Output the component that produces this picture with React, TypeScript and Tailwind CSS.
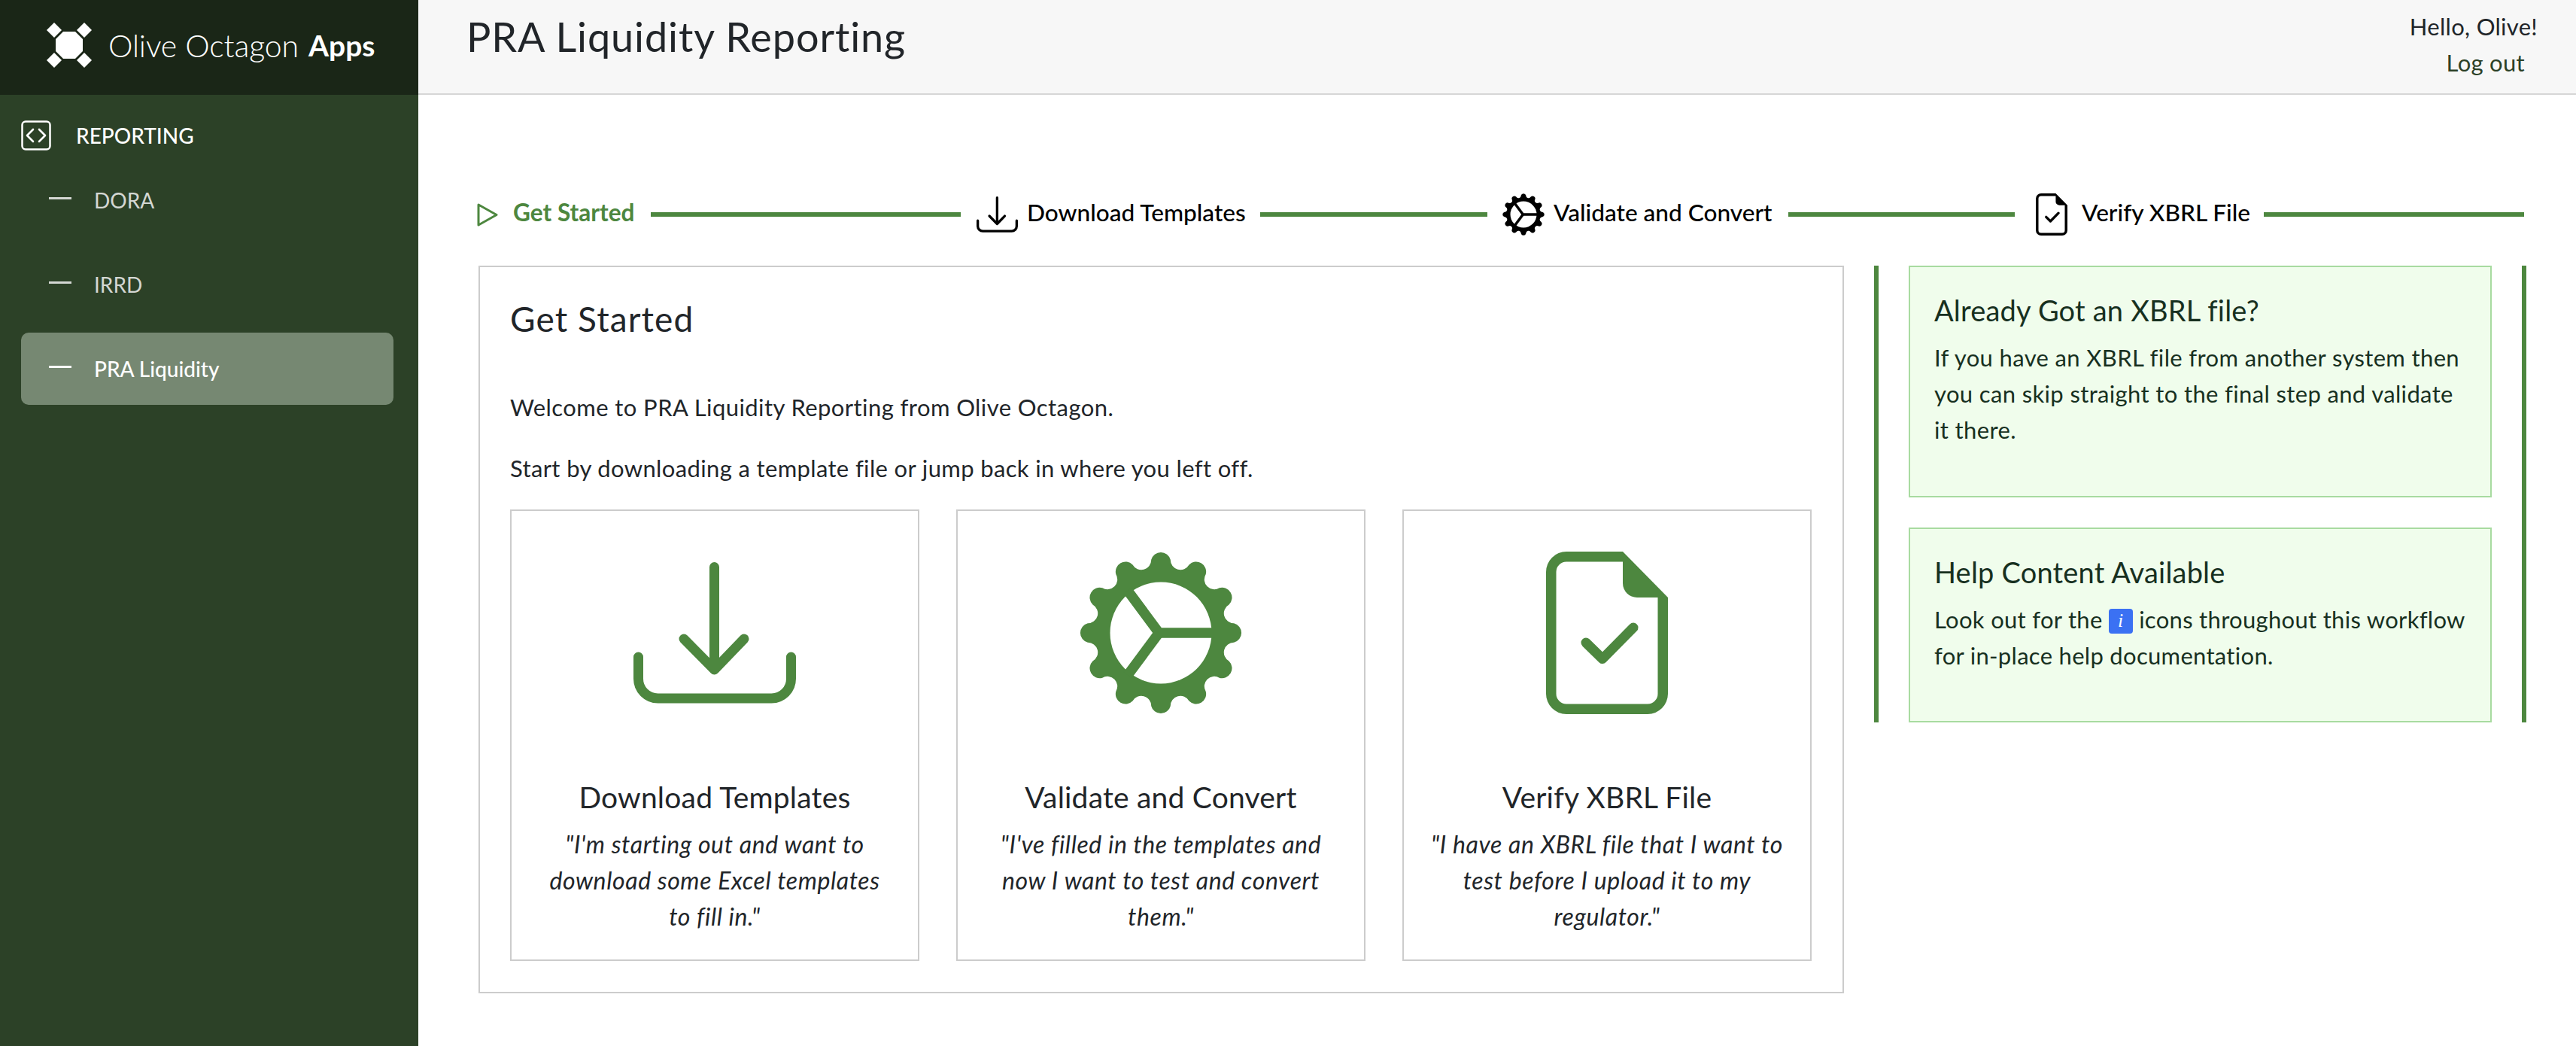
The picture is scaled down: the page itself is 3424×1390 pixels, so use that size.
import React from "react";

function gearPath(): string {
  const c = 108;
  const pts = 12;
  const step = (Math.PI * 2) / (pts * 2);
  const r = 98;
  let d = "";
  for (let i = 0; i < pts * 2; i++) {
    const a0 = -Math.PI / 2 - step / 2 + i * step;
    const a1 = a0 + step;
    const x0 = c + r * Math.cos(a0);
    const y0 = c + r * Math.sin(a0);
    const x1 = c + r * Math.cos(a1);
    const y1 = c + r * Math.sin(a1);
    if (i === 0) d += `M${x0.toFixed(2)} ${y0.toFixed(2)}`;
    d += `A13.2 13.2 0 0 ${i % 2 === 0 ? 1 : 0} ${x1.toFixed(2)} ${y1.toFixed(2)}`;
  }
  return d + "Z";
}
const GEAR = gearPath();

function DownloadIcon({ className, color }: { className: string; color: string }) {
  return (
    <svg viewBox="0 0 216 188" className={className} fill="none" stroke={color} strokeWidth="13" strokeLinecap="round" strokeLinejoin="round">
      <path d="M107.5 6.5V143M67 102l40.5 41L147 102" />
      <path d="M6.5 126V155A26 26 0 0 0 32.5 181H183.5A26 26 0 0 0 209.5 155V126" />
    </svg>
  );
}

function GearIcon({ className, color }: { className: string; color: string }) {
  return (
    <svg viewBox="0 0 216 216" className={className}>
      <path d={GEAR} fill={color} />
      <circle cx="108" cy="108" r="67.5" fill="#fff" />
      <g stroke={color} strokeWidth="13.5" fill="none">
        <path d="M180 108H105.5L64 52" />
        <path d="M105.5 108L64 164" />
      </g>
    </svg>
  );
}

function FileIcon({ className, color }: { className: string; color: string }) {
  return (
    <svg viewBox="0 0 162 216" className={className}>
      <path
        fillRule="evenodd"
        fill={color}
        d="M27 0H102L162 61V189A27 27 0 0 1 135 216H27A27 27 0 0 1 0 189V27A27 27 0 0 1 27 0ZM27 13.5A13.5 13.5 0 0 0 13.5 27V189A13.5 13.5 0 0 0 27 202.5H135A13.5 13.5 0 0 0 148.5 189V61H121A19 19 0 0 1 102 42V13.5Z"
      />
      <path d="M53 121L75 142.5L116 101" fill="none" stroke={color} strokeWidth="13" strokeLinecap="round" strokeLinejoin="round" />
    </svg>
  );
}

function LogoIcon() {
  return (
    <svg viewBox="0 0 60 60" className="w-[60px] h-[60px] shrink-0" fill="#fff">
      <polygon points="22,12 38,12 48,22 48,38 38,48 22,48 12,38 12,22" />
      <polygon points="10,0 20,10 10,20 0,10" />
      <polygon points="50,0 60,10 50,20 40,10" />
      <polygon points="10,40 20,50 10,60 0,50" />
      <polygon points="50,40 60,50 50,60 40,50" />
    </svg>
  );
}

function NavItem({ label, active }: { label: string; active?: boolean }) {
  return (
    <div className={`h-[96px] rounded-[10px] flex items-center pl-[37px] gap-[30px] mb-[16px] ${active ? "bg-[#768872] text-white font-medium" : "text-[#d4d7d3]"}`}>
      <div className={`w-[30px] h-[3px] mb-[5px] ${active ? "bg-white" : "bg-[#d4d7d3]"}`} />
      <span className="text-[28px] leading-[40px]">{label}</span>
    </div>
  );
}

function Line({ className }: { className: string }) {
  return <div className={`h-[6px] bg-[#4d873f] shrink-0 ${className}`} />;
}

function ChoiceCard({ icon, title, lines }: { icon: React.ReactNode; title: string; lines: string[] }) {
  return (
    <div className="w-[544px] h-[600px] border-2 border-[#cccccc] flex flex-col items-center pt-[54px] text-center">
      <div className="h-[216px] flex items-center justify-center">{icon}</div>
      <div className="mt-[86px] text-[39px] leading-[48px] text-[#212529] tracking-[0.2px]">{title}</div>
      <div className="mt-[15px] text-[32px] leading-[48px] italic text-[#212529] tracking-[0.6px]">
        {lines.map((l) => (
          <div key={l}>{l}</div>
        ))}
      </div>
    </div>
  );
}

export default function App() {
  return (
    <div className="flex h-screen w-full overflow-hidden bg-white [font-family:Lato,sans-serif]">
      <aside className="w-[556px] shrink-0 bg-[#2c4127] flex flex-col">
        <div className="h-[126px] bg-[#1a2617] flex items-center pl-[62px] pb-[6px] text-white">
          <LogoIcon />
          <span className="ml-[22px] text-[41px] font-light tracking-[-0.1px] leading-none">Olive Octagon</span>
          <span className="ml-[13px] text-[39px] font-bold leading-none">Apps</span>
        </div>
        <div className="pl-[28px] pr-[33px] pt-[34px]">
          <div className="flex items-center h-[40px] mb-[18px] text-white">
            <svg viewBox="0 0 40 40" className="w-[40px] h-[40px]" fill="none" stroke="#fff" strokeWidth="2.5" strokeLinecap="round" strokeLinejoin="round">
              <rect x="1.5" y="1.5" width="37" height="37" rx="4.5" />
              <path d="M16 12L8 20L16 28M24 12L32 20L24 28" strokeWidth="2.6" />
            </svg>
            <span className="ml-[33px] text-[28px] font-medium">REPORTING</span>
          </div>
          <NavItem label="DORA" />
          <NavItem label="IRRD" />
          <NavItem label="PRA Liquidity" active />
        </div>
      </aside>

      <main className="flex-1 flex flex-col min-w-0">
        <header className="h-[126px] bg-[#f7f7f7] border-b-2 border-[#d6d6d6] flex justify-between pl-[64px] pr-[51px] text-[#212529]">
          <h1 className="text-[54px] leading-[98px] tracking-[0.9px]">PRA Liquidity Reporting</h1>
          <div className="text-right text-[31px] leading-[48px] pt-[11px] tracking-[0.3px]">
            <div>Hello, Olive!</div>
            <div className="mr-[17px] text-[#2c4127]">Log out</div>
          </div>
        </header>

        <div className="pl-[78px] pr-[66px] pt-[131px]">
          <div className="flex items-center h-[56px] text-[31.6px] text-black">
            <svg viewBox="0 0 28 31" className="w-[28px] h-[31px] shrink-0" fill="none" stroke="#4d873f" strokeWidth="3" strokeLinejoin="round">
              <path d="M2 2L26 15.5L2 29Z" />
            </svg>
            <span className="ml-[20px] w-[162px] whitespace-nowrap font-bold text-[#4d873f] pb-[4px]">Get Started</span>
            <Line className="ml-[21px] w-[412px]" />
            <DownloadIcon className="ml-[21px] w-[55px] h-[48px] shrink-0" color="#000" />
            <span className="ml-[12px] w-[289px] whitespace-nowrap font-medium pb-[4px]">Download Templates</span>
            <Line className="ml-[21px] w-[302px]" />
            <GearIcon className="ml-[20px] w-[56px] h-[56px] shrink-0" color="#000" />
            <span className="ml-[12px] w-[291px] whitespace-nowrap font-medium pb-[4px]">Validate and Convert</span>
            <Line className="ml-[21px] w-[301px]" />
            <FileIcon className="ml-[28px] w-[42px] h-[56px] shrink-0" color="#000" />
            <span className="ml-[19px] w-[221px] whitespace-nowrap font-medium pb-[4px]">Verify XBRL File</span>
            <Line className="ml-[21px] w-[346px]" />
          </div>

          <div className="flex items-start mt-[40px] ml-[2px]">
            <section className="w-[1815px] shrink-0 border-2 border-[#cccccc] pt-[43px] pl-[40px] pb-[41px] text-[#212529]">
              <h2 className="text-[46px] leading-[52px] tracking-[1.1px]">Get Started</h2>
              <p className="mt-[67px] text-[31px] leading-[48px] tracking-[0.42px]">Welcome to PRA Liquidity Reporting from Olive Octagon.</p>
              <p className="mt-[33px] text-[31px] leading-[48px] tracking-[0.36px]">Start by downloading a template file or jump back in where you left off.</p>
              <div className="mt-[31px] flex gap-[49px]">
                <ChoiceCard
                  icon={<DownloadIcon className="w-[216px] h-[188px]" color="#4d873f" />}
                  title="Download Templates"
                  lines={['"I\'m starting out and want to', "download some Excel templates", 'to fill in."']}
                />
                <ChoiceCard
                  icon={<GearIcon className="w-[216px] h-[216px]" color="#4d873f" />}
                  title="Validate and Convert"
                  lines={['"I\'ve filled in the templates and', "now I want to test and convert", 'them."']}
                />
                <ChoiceCard
                  icon={<FileIcon className="w-[162px] h-[216px]" color="#4d873f" />}
                  title="Verify XBRL File"
                  lines={['"I have an XBRL file that I want to', "test before I upload it to my", 'regulator."']}
                />
              </div>
            </section>

            <section className="ml-[40px] w-[867px] shrink-0 border-x-[6px] border-[#4d873f] px-[40px] flex flex-col gap-[40px] text-[#17301f]">
              <div className="border-2 border-[#a8dba0] bg-[#f0fdec] pt-[33px] pl-[32px] pb-[64px]">
                <h3 className="text-[38px] leading-[48px] tracking-[0.2px]">Already Got an XBRL file?</h3>
                <p className="mt-[15px] text-[31px] leading-[48px] tracking-[0.36px]">
                  If you have an XBRL file from another system then
                  <br />
                  you can skip straight to the final step and validate
                  <br />
                  it there.
                </p>
              </div>
              <div className="border-2 border-[#a8dba0] bg-[#f0fdec] pt-[33px] pl-[32px] pb-[63px]">
                <h3 className="text-[38px] leading-[48px] tracking-[0.2px]">Help Content Available</h3>
                <p className="mt-[15px] text-[31px] leading-[48px] tracking-[0.3px]">
                  Look out for the{" "}
                  <span className="inline-flex w-[32px] h-[33px] align-[2px] items-center justify-center rounded-[4px] bg-[#3b71f3] text-white italic text-[26px] leading-none [font-family:'Liberation_Serif',serif]">i</span>{" "}
                  icons throughout this workflow
                  <br />
                  for in-place help documentation.
                </p>
              </div>
            </section>
          </div>
        </div>
      </main>
    </div>
  );
}
